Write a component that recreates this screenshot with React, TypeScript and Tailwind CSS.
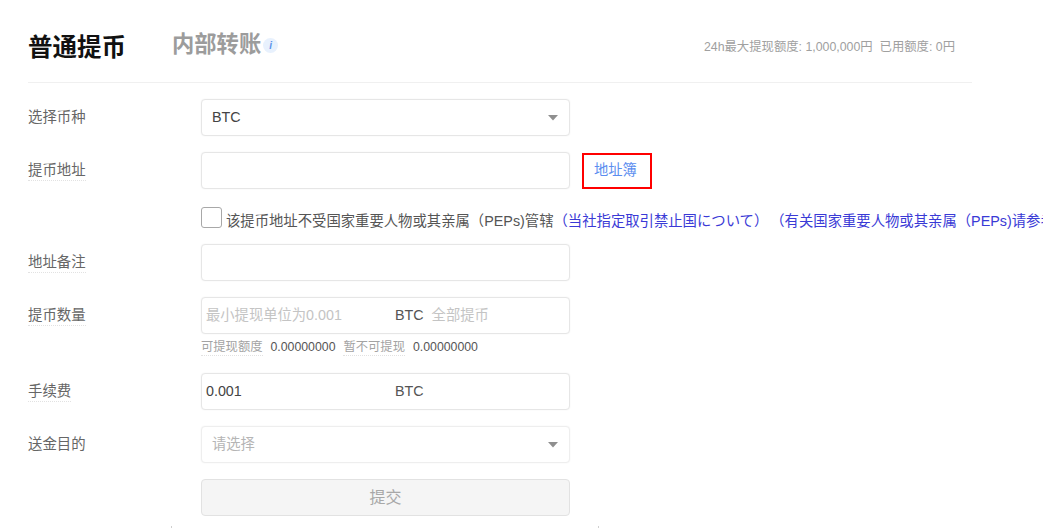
const cjk = "font-['Liberation_Sans','Noto_Sans_CJK_SC',sans-serif]";

function Caret({ className = "" }: { className?: string }) {
  return (
    <svg width="10" height="6" viewBox="0 0 10 6" className={className}>
      <path d="M0 0h10L5 5.5z" fill="#8f8f8f" />
    </svg>
  );
}

function Row({ label, dotted, children, className = "" }: { label: string; dotted?: boolean; children?: React.ReactNode; className?: string }) {
  return (
    <div className={`flex items-center h-[37px] ${className}`}>
      <div className="w-[173px] shrink-0 flex">
        <span className={`text-[14.4px] text-[#666] leading-[19px] border-b border-dotted ${dotted ? "border-[#e2e2e2]" : "border-transparent"}`}>
          {label}
        </span>
      </div>
      {children}
    </div>
  );
}

function Box({ children, className = "" }: { children?: React.ReactNode; className?: string }) {
  return (
    <div className={`w-[369px] h-[37px] shrink-0 rounded-[4px] border border-[#e6e6e6] bg-white flex items-center text-[14.3px] shadow-[0_0_2px_rgba(0,0,0,0.06)] ${className}`}>
      {children}
    </div>
  );
}

export default function App() {
  return (
    <div className={`relative w-[1043px] h-[528px] overflow-hidden bg-white ${cjk}`}>
      <div className="pl-[28px] pt-[33px] w-[972px]">
        <header className="h-[50px] flex items-start border-b border-[#f0f0f0]">
          <span className="text-[24.5px] leading-[32px] font-bold text-[#111] -mt-[1px]">普通提币</span>
          <span className="ml-[46px] text-[22.3px] leading-[26px] font-bold text-[#9c9c9c] -mt-[1px]">内部转账</span>
          <span className="ml-[2px] mt-[5px] w-[15px] h-[15px] rounded-full bg-[#e8f1fd] flex items-center justify-center text-[10px] italic font-bold text-[#5b93ea] leading-none">
            i
          </span>
          <span className="ml-auto mr-[17px] mt-[6px] text-[12.35px] leading-[16px] text-[#a0a0a0]">
            24h最大提现额度: 1,000,000円&nbsp;&nbsp;已用额度: 0円
          </span>
        </header>

        <div className="mt-[16px] flex flex-col">
          <Row label="选择币种">
            <Box className="justify-between pl-[10px] pr-[11px] text-[#444]">
              <span>BTC</span>
              <Caret />
            </Box>
          </Row>

          <Row label="提币地址" dotted className="mt-[16px]">
            <Box />
            <a className="ml-[12px] w-[70px] h-[36px] border-2 border-[#ff0000] flex items-center pl-[10px] text-[14.3px] text-[#5b8def]">
              地址簿
            </a>
          </Row>

          <div className="mt-[18px] ml-[173px] flex items-start h-[21px] whitespace-nowrap text-[14.35px] leading-[20px]">
            <span className="w-[21px] h-[21px] shrink-0 rounded-[3px] border border-[#a8a8a8] bg-white" />
            <span className="ml-[4px] mt-[4px] text-[#555]">该提币地址不受国家重要人物或其亲属（PEPs)管辖</span>
            <span className="mt-[4px] text-[#3a3ad6]">（当社指定取引禁止国について）</span>
            <span className="ml-[2px] mt-[4px] text-[#3a3ad6]">（有关国家重要人物或其亲属（PEPs)请参考）</span>
          </div>

          <Row label="地址备注" dotted className="mt-[16px]">
            <Box />
          </Row>

          <Row label="提币数量" dotted className="mt-[16px]">
            <Box className="pl-[4px]">
              <span className="w-[189px] text-[#c4c4c4]">最小提现单位为0.001</span>
              <span className="text-[#555]">BTC</span>
              <span className="ml-[8px] text-[#c4c4c4]">全部提币</span>
            </Box>
          </Row>

          <div className="mt-[6px] ml-[173px] h-[15px] flex items-center text-[12.3px] leading-[15px]">
            <span className="text-[#a3a3a3] border-b border-dotted border-[#e2e2e2]">可提现额度</span>
            <span className="ml-[8px] text-[#555]">0.00000000</span>
            <span className="ml-[8px] text-[#a3a3a3] border-b border-dotted border-[#e2e2e2]">暂不可提现</span>
            <span className="ml-[8px] text-[#555]">0.00000000</span>
          </div>

          <Row label="手续费" dotted className="mt-[18px]">
            <Box className="pl-[4px]">
              <span className="w-[189px] text-[#444]">0.001</span>
              <span className="text-[#555]">BTC</span>
            </Box>
          </Row>

          <Row label="送金目的" className="mt-[16px]">
            <Box className="justify-between pl-[10px] pr-[11px] border-[#eeeeee]">
              <span className="text-[#b5b5b5]">请选择</span>
              <Caret />
            </Box>
          </Row>

          <div className="mt-[16px] ml-[173px] w-[369px] h-[37px] rounded-[4px] border border-[#e2e2e2] bg-[#f5f5f5] flex items-center justify-center text-[16px] text-[#a8a8a8]">
            提交
          </div>
        </div>
      </div>
      <span className="absolute left-[171px] top-[526px] w-px h-[2px] bg-[#cfcfcf]" />
      <span className="absolute left-[598px] top-[526px] w-px h-[2px] bg-[#cfcfcf]" />
    </div>
  );
}
